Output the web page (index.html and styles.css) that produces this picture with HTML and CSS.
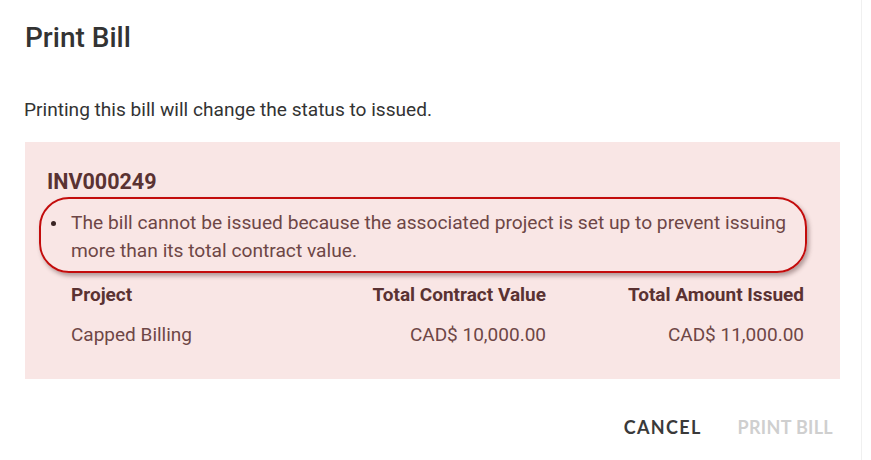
FILE: index.html
```html
<!DOCTYPE html>
<html>
<head>
<meta charset="utf-8">
<link rel="stylesheet" href="styles.css">
</head>
<body>
<div class="dialog">
  <h1 class="title">Print Bill</h1>
  <p class="intro">Printing this bill will change the status to issued.</p>
  <div class="alert">
    <div class="inv">INV000249</div>
    <div class="oval">
      <ul class="msgs">
        <li>The bill cannot be issued because the associated project is set up to prevent issuing more than its total contract value.</li>
      </ul>
    </div>
    <div class="table">
      <div class="th">Project</div>
      <div class="th num">Total Contract Value</div>
      <div class="th num">Total Amount Issued</div>
      <div class="td">Capped Billing</div>
      <div class="td num">CAD$ 10,000.00</div>
      <div class="td num">CAD$ 11,000.00</div>
    </div>
  </div>
  <div class="actions">
    <button class="btn cancel">CANCEL</button>
    <button class="btn disabled">PRINT BILL</button>
  </div>
</div>
</body>
</html>
```

FILE: styles.css
```css
* { box-sizing: border-box; }
html, body { margin: 0; padding: 0; background: #fff; }
body { font-family: Roboto, "Noto Sans", sans-serif; width: 871px; height: 460px; overflow: hidden; }
.dialog {
  width: 862px;
  height: 460px;
  background: #fff;
  border-right: 1px solid #f0f0f0;
  padding: 0 0 0 25px;
  display: flex;
  flex-direction: column;
}
.title {
  margin: 22px 0 0 0;
  font-size: 28px;
  font-weight: 500;
  color: #333;
  line-height: 32px;
}
.intro {
  margin: 44px 0 0 -1px;
  font-size: 19.1px;
  color: #333;
  line-height: 24px;
}
.alert {
  margin-top: 20px;
  width: 815px;
  height: 237px;
  background: #f9e6e5;
  padding: 28px 0 0 22px;
  color: #6e4646;
}
.inv {
  font-size: 21.5px;
  font-weight: 700;
  line-height: 24px;
  color: #5a3232;
}
.oval {
  margin: 3px 0 0 -8px;
  width: 768px;
  height: 76px;
  border: 2px solid #c30c0c;
  border-radius: 30px;
  box-shadow: 2px 3px 4px rgba(90, 60, 60, 0.45);
  padding: 10px 0 0 30px;
}
.msgs {
  margin: 0;
  padding: 0;
  list-style: none;
  font-size: 19.2px;
  line-height: 28px;
  color: #6e4646;
}
.msgs li { position: relative; }
.msgs li::before {
  content: "";
  position: absolute;
  left: -20px;
  top: 12px;
  width: 5px;
  height: 5px;
  border-radius: 50%;
  background: #3a2424;
}
.table {
  display: grid;
  grid-template-columns: 220px 255px 258px;
  margin: 10px 0 0 24px;
  row-gap: 16px;
  font-size: 19px;
  line-height: 24px;
}
.th { font-weight: 700; color: #5a3232; }
.td { color: #6e4646; }
.num { text-align: right; }
.actions {
  display: flex;
  justify-content: flex-end;
  gap: 36px;
  margin-top: 36px;
  padding-right: 28px;
}
.btn {
  background: none;
  border: none;
  padding: 0;
  font-family: Lato, "Open Sans", sans-serif;
  font-weight: 700;
  font-size: 18px;
  line-height: 24px;
  letter-spacing: 0.3px;
  color: #3a3a3a;
  cursor: pointer;
}
.btn.cancel { letter-spacing: 1.3px; }
.btn.disabled { color: #cfcfcf; }
```
